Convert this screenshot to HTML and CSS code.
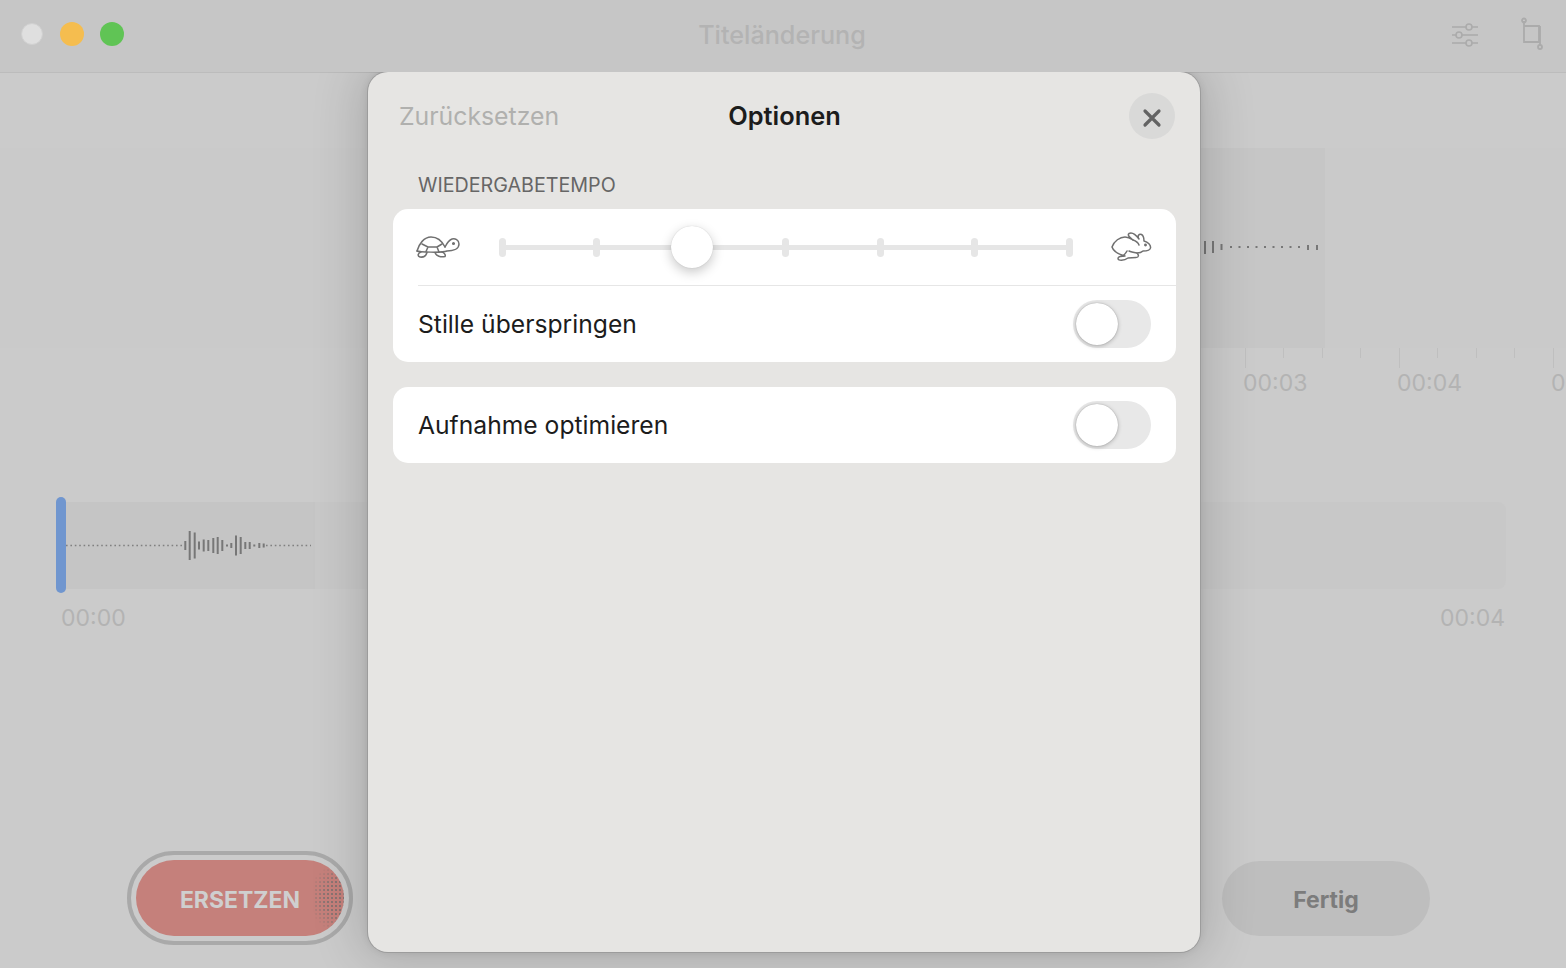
FILE: index.html
```html
<!DOCTYPE html>
<html lang="de">
<head>
    <meta charset="UTF-8">
    <title>Titeländerung</title>
    <link rel="stylesheet" href="styles.css">
</head>
<body>
    <div class="window">
        <header class="titlebar">
            <div class="lights">
                <span class="light light-close"></span>
                <span class="light light-min"></span>
                <span class="light light-max"></span>
            </div>
            <div class="window-title">Titeländerung</div>
            <div class="tools">
                <svg class="tool-sliders" width="28" height="28" viewBox="0 0 28 28" fill="none" stroke="#ababab" stroke-width="1.6">
                    <path d="M1 7H15M21 7H27M1 15H5M11 15H27M1 23H15M21 23H27"/>
                    <circle cx="18" cy="7" r="3"/>
                    <circle cx="8" cy="15" r="3"/>
                    <circle cx="18" cy="23" r="3"/>
                </svg>
                <svg class="tool-crop" width="24" height="34" viewBox="0 0 24 34" fill="none" stroke="#ababab" stroke-width="1.8">
                    <path d="M4 4V25H19V9H4"/>
                    <circle cx="4" cy="3.500" r="2"/>
                    <circle cx="20" cy="30" r="2"/>
                    <path d="M20 9V28"/>
                </svg>
            </div>
        </header>

        <main class="editor">
            <div class="track">
                <div class="track-fill">
                    <svg class="wave" width="957" height="200" viewBox="368 148 957 200" fill="none" stroke="#777">
                        <path stroke-width="2" d="M1205 241v13M1213 241v12M1221.500 244v6M1308 245v5M1317 245v5"/>
                        <path stroke-width="2" stroke-dasharray="2 6.500" d="M1230 247H1304"/>
                    </svg>
                </div>
            </div>
            <div class="ruler">
                <svg class="ruler-ticks" width="1566" height="20" viewBox="0 0 1566 20" fill="none" stroke="#bfbfbf">
                    <path d="M1245.500 0v20M1283.500 0v10M1322.500 0v10M1360.500 0v10M1399.500 0v20M1437.500 0v10M1476.500 0v10M1514.500 0v10M1553.500 0v20"/>
                </svg>
                <div class="ruler-labels">
                    <span class="ruler-label">00:03</span>
                    <span class="ruler-label">00:04</span>
                    <span class="ruler-label">0</span>
                </div>
            </div>

            <div class="overview">
                <span class="playhead"></span>
                <div class="strip">
                    <div class="strip-fill">
                        <svg width="249" height="87" viewBox="66 501 249 87" fill="none" stroke="#777">
                            <path stroke="#808080" stroke-width="1.600" stroke-dasharray="1.600 2.800" d="M66 544.500H183M266 544.500H311"/>
                            <path stroke-width="2" d="M185.300 540v9M189.700 530v29M194.700 531.500v26M199 540.500v8M203.700 538.500v12M208.300 539v11M213.300 537v15M217.700 536v17M222.300 539v11M227 543.500v2M231.300 542v5M236 534.500v20M240.700 536v17M245.300 541v7M249.700 541v7M254.300 543.500v2M259.300 542v5M263.700 542.500v4"/>
                        </svg>
                    </div>
                </div>
            </div>
            <div class="overview-times">
                <span>00:00</span>
                <span>00:04</span>
            </div>

            <div class="actions">
                <div class="record-ring">
                    <button class="record-btn">ERSETZEN</button>
                </div>
                <button class="done-btn">Fertig</button>
            </div>
        </main>

        <!-- Options sheet -->
        <section class="sheet">
            <div class="sheet-head">
                <span class="sheet-reset">Zurücksetzen</span>
                <h1 class="sheet-title">Optionen</h1>
                <button class="sheet-close" aria-label="Schließen">
                    <svg width="20" height="20" viewBox="0 0 20 20" fill="none" stroke="#636363" stroke-width="3.200" stroke-linecap="round">
                        <path d="M3 3L17 17M17 3L3 17"/>
                    </svg>
                </button>
            </div>

            <div class="group-label">WIEDERGABETEMPO</div>
            <div class="card">
                <div class="speed-row">
                    <svg class="turtle" width="44" height="22" viewBox="0 0 44 22" fill="none" stroke="#707070" stroke-width="1.500" stroke-linejoin="round" stroke-linecap="round">
                        <path d="M1 15C3 8 8 1 15 1C21 1 26 5 29 11"/>
                        <path d="M1 15C3 16 26 17 31 15C37 15 43 13 43 8C43 4 39 2 36 3C33 4 31 7 29 11"/>
                        <path d="M6 8L12 11H21L26 8M12 11L10 15.500M21 11L23 16"/>
                        <path d="M5 16C2 17 1 20 4 21C7 21.500 10 20 11 16.500"/>
                        <path d="M19 16.500C20 20 25 21.500 29 20.500C30 19 28 16.500 26 16"/>
                        <circle cx="37.500" cy="7.500" r="0.800" fill="#707070"/>
                    </svg>
                    <div class="slider">
                        <span class="slider-line"></span>
                        <span class="slider-tick"></span>
                        <span class="slider-tick"></span>
                        <span class="slider-tick"></span>
                        <span class="slider-tick"></span>
                        <span class="slider-tick"></span>
                        <span class="slider-tick"></span>
                        <span class="slider-tick"></span>
                        <span class="slider-thumb"></span>
                    </div>
                    <svg class="rabbit" width="41" height="30" viewBox="0 0 41 30" fill="none" stroke="#707070" stroke-width="1.500" stroke-linejoin="round" stroke-linecap="round">
                        <path d="M1 15C3 9 9 5 14 5C17 5 19 6 22 8C19 6 16 3 18 1.500C21 0 25 3 28 7C26 4 28 1.500 30.500 2.500C33 4 33 7 33 9C37 10 40 13 39.500 16C39 19 35 19 32 19C30 21 28 21 26 21C28 23 28 25.500 25 25.500L17 26C13 29 7 29 7 26.500C7 24.500 10 24 14 24C10 23 3 21 1 15Z"/>
                        <path d="M22 8C25 9 27 10 28 13M18 19C20 20 23 20.500 26 21M12 24C14 22 15 21 16 19"/>
                        <circle cx="34.500" cy="13" r="0.700" fill="#707070"/>
                    </svg>
                </div>
                <div class="option-row option-row-line">
                    <span class="option-name">Stille überspringen</span>
                    <span class="toggle"><span class="toggle-knob"></span></span>
                </div>
            </div>

            <div class="card">
                <div class="option-row">
                    <span class="option-name">Aufnahme optimieren</span>
                    <span class="toggle"><span class="toggle-knob"></span></span>
                </div>
            </div>
        </section>
    </div>
</body>
</html>
```

FILE: styles.css
```css
* {
    margin: 0;
    padding: 0;
    box-sizing: border-box;
    font-family: 'Inter', 'Liberation Sans', sans-serif;
}

body {
    background: #cbcbcb;
    overflow: hidden;
}

.window {
    position: relative;
    width: 1566px;
    height: 968px;
    overflow: hidden;
    background: #cbcbcb;
}

/* Title bar */
.titlebar {
    position: relative;
    z-index: 2;
    display: grid;
    grid-template-columns: 1fr auto 1fr;
    align-items: center;
    height: 73px;
    padding: 0 22px 4px 20px;
    background: #c6c6c6;
    border-bottom: 1px solid #bcbcbc;
}

.lights {
    display: flex;
    align-items: center;
    gap: 16px;
}

.light {
    width: 24px;
    height: 24px;
    border-radius: 50%;
}

.light-close {
    width: 22px;
    height: 22px;
    margin: 0 1px;
    background: #dfdfdf;
    border: 1px solid #d0d0d0;
}

.light-min {
    background: #f5bd4f;
}

.light-max {
    background: #60c455;
}

.window-title {
    padding-top: 2px;
    color: #b3b3b3;
    font-size: 25.200px;
    font-weight: 500;
}

.tools {
    display: flex;
    align-items: center;
    justify-content: flex-end;
    gap: 41px;
}

/* Background editor */
.editor {
    display: flex;
    flex-direction: column;
    height: 895px;
}

.track {
    height: 200px;
    margin-top: 75px;
    padding-left: 368px;
    background: #cacaca;
}

.track-fill {
    width: 957px;
    height: 200px;
    background: #c6c6c6;
}

.wave,
.strip-fill svg,
.ruler-ticks {
    display: block;
}

.ruler {
    height: 149px;
}

.ruler-labels {
    display: flex;
    width: 1566px;
    padding-left: 1243px;
}

.ruler-label {
    flex: 0 0 154px;
    color: #b3b3b3;
    font-size: 23px;
    line-height: 30px;
}

.ruler-label:last-child {
    flex-basis: 15px;
}

.overview {
    display: flex;
    align-items: center;
    height: 96px;
    padding-left: 56px;
}

.playhead {
    flex: 0 0 10px;
    height: 96px;
    background: #7096cf;
    border-radius: 5px;
}

.strip {
    width: 1440px;
    height: 87px;
    background: #c8c8c8;
    border-radius: 0 8px 8px 0;
}

.strip-fill {
    width: 249px;
    height: 87px;
    background: #c5c5c5;
}

.overview-times {
    display: flex;
    justify-content: space-between;
    padding: 10px 61px 0 61px;
    color: #b3b3b3;
    font-size: 23px;
    line-height: 30px;
}

.actions {
    display: flex;
    align-items: center;
    justify-content: space-between;
    padding: 0 136px 0 127px;
    margin-top: 218px;
}

.record-ring {
    width: 226px;
    height: 94px;
    padding: 5px;
    border: 4px solid #a9a9a9;
    border-radius: 47px;
}

.record-btn {
    position: relative;
    width: 100%;
    height: 100%;
    padding-top: 3px;
    overflow: hidden;
    color: #cfcfcf;
    background: #c5807b;
    border: none;
    border-radius: 38px;
    font-size: 23px;
    font-weight: 700;
}

.record-btn::after {
    content: '';
    position: absolute;
    top: 8px;
    right: 0;
    width: 30px;
    height: 60px;
    background-image: radial-gradient(circle, #6f6f6f 0.7px, transparent 1px);
    background-size: 4px 4px;
    opacity: 0.7;
    -webkit-mask-image: radial-gradient(ellipse at right center, #000 45%, transparent 85%);
}

.done-btn {
    width: 208px;
    height: 75px;
    padding-top: 3px;
    color: #7c7c7c;
    background: #bebebe;
    border: none;
    border-radius: 38px;
    font-size: 23px;
    font-weight: 700;
}

/* Options sheet */
.sheet {
    position: absolute;
    z-index: 3;
    top: 72px;
    left: 368px;
    width: 832px;
    height: 880px;
    padding: 0 24px 0 25px;
    background: #e6e5e3;
    border-radius: 20px;
    box-shadow: 0 0 0 1px #9c9c9c, 0 0 8px rgba(0, 0, 0, 0.1), 0 0 50px 8px rgba(0, 0, 0, 0.16);
    clip-path: inset(0 -100px -100px -100px);
}

.sheet-head {
    display: grid;
    grid-template-columns: 1fr auto 1fr;
    align-items: center;
    height: 88px;
}

.sheet-reset {
    margin-left: 6px;
    color: #b0b0ae;
    font-size: 24.800px;
}

.sheet-title {
    margin-top: -2px;
    color: #1c1c1c;
    font-size: 25.400px;
    font-weight: 600;
}

.sheet-close {
    display: flex;
    align-items: center;
    justify-content: center;
    justify-self: end;
    width: 46px;
    height: 46px;
    padding-top: 4px;
    margin-right: 1px;
    background: #d9d9d8;
    border: none;
    border-radius: 50%;
}

.group-label {
    padding: 0 0 0 25px;
    margin-top: 13px;
    margin-bottom: 12px;
    color: #666;
    font-size: 19.700px;
    line-height: 24px;
}

.card {
    margin-bottom: 25px;
    background: white;
    border-radius: 15px;
}

.speed-row {
    display: flex;
    align-items: center;
    height: 76px;
    padding: 0 24px 0 23px;
}

.slider {
    position: relative;
    display: flex;
    align-items: center;
    justify-content: space-between;
    flex: 1;
    height: 40px;
    margin: 0 38.500px;
}

.slider-line {
    position: absolute;
    left: 3px;
    right: 3px;
    top: 18px;
    height: 5px;
    background: #e6e6e6;
}

.slider-tick {
    position: relative;
    width: 7px;
    height: 19px;
    background: #e6e6e6;
    border-radius: 3.500px;
}

.slider-thumb {
    position: absolute;
    left: 172px;
    top: -1px;
    width: 42px;
    height: 42px;
    background: white;
    border-radius: 50%;
    box-shadow: 0 4px 12px rgba(0, 0, 0, 0.22), 0 0 1px rgba(0, 0, 0, 0.2);
}

.option-row {
    display: flex;
    align-items: center;
    justify-content: space-between;
    height: 76px;
    padding: 0 25px;
}

.option-row-line {
    height: 77px;
    margin-left: 25px;
    padding-left: 0;
    border-top: 1px solid #e6e6e6;
}

.option-name {
    color: #1c1c1c;
    font-size: 24.660px;
}

.toggle {
    display: block;
    width: 78px;
    height: 48px;
    padding: 3px;
    background: #e8e8e8;
    border-radius: 24px;
}

.toggle-knob {
    display: block;
    width: 42px;
    height: 42px;
    background: white;
    border-radius: 50%;
    box-shadow: 0 1px 4px rgba(0, 0, 0, 0.25), 0 0 1px rgba(0, 0, 0, 0.3);
}
```
